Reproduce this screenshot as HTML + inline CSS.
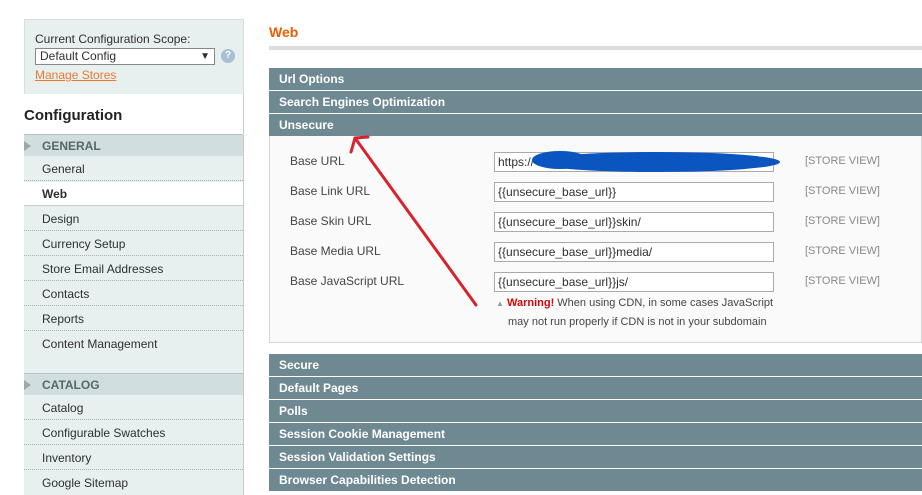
<!DOCTYPE html>
<html><head><meta charset="utf-8"><style>
body{margin:0;width:922px;height:495px;background:#fff;font-family:"Liberation Sans",Arial,sans-serif;font-size:12px;color:#2f2f2f;position:relative;overflow:hidden}
.a{position:absolute}
.scope{left:24px;top:19px;width:218px;height:75px;background:#e7efef;border:1px solid #d6dede}
.nav{left:24px;width:219px;background:#e7efef;border-right:1px solid #c4cccc}
.item{position:absolute;left:24px;width:219px;height:24px;border-bottom:1px dotted #a9b0b0;line-height:24px;padding-left:18px;box-sizing:border-box;font-size:12px}
.grp{position:absolute;left:24px;width:219px;height:22px;background:#d1dedf;border-top:1px solid #b6c3c4;line-height:22px;padding-left:18px;box-sizing:border-box;font-weight:bold;color:#56676b;font-size:12px}
.grp:before{content:"";position:absolute;left:0;top:6px;border-left:7px solid #9aa9ab;border-top:5px solid transparent;border-bottom:5px solid transparent}
.hd{position:absolute;left:269px;width:653px;height:22px;background:#6f8992;color:#fff;font-weight:bold;line-height:22px;padding-left:10px;box-sizing:border-box;font-size:12px}
.lb{position:absolute;left:290px;font-size:12px;color:#444}
.in{position:absolute;left:494px;width:280px;height:20px;border:1px solid #aaa;background:#fff;box-sizing:border-box;line-height:18px;padding-left:3px;font-size:12px}
.sv{position:absolute;left:805px;font-size:11px;color:#888}
</style></head><body>
<div class="a scope"></div>
<div class="a" style="left:35px;top:32px;">Current Configuration Scope:</div>
<div class="a" style="left:35px;top:48px;width:180px;height:17px;border:1px solid #888;background:#fff;box-sizing:border-box;line-height:15px;padding-left:4px">Default Config<span style="position:absolute;right:4px;top:0;font-size:10px">&#9660;</span></div>
<div class="a" style="left:221px;top:49px;width:14px;height:14px;border-radius:50%;background:#a9bfd6;color:#fff;font-size:10px;text-align:center;line-height:14px;font-weight:bold">?</div>
<div class="a" style="left:35px;top:68px;color:#eb7a2d;text-decoration:underline">Manage Stores</div>
<div class="a" style="left:24px;top:94px;width:219px;height:40px;background:#fff;border-right:1px solid #c4cccc"></div>
<div class="a" style="left:24px;top:107px;font-size:15px;font-weight:bold;color:#222">Configuration</div>
<div class="a nav" style="top:135px;height:360px"></div>
<div class="grp" style="top:134px">GENERAL</div>
<div class="item" style="top:157px">General</div>
<div class="item" style="top:182px;background:#fff;font-weight:bold;border-bottom:1px solid #c4cccc">Web</div>
<div class="item" style="top:207px">Design</div>
<div class="item" style="top:232px">Currency Setup</div>
<div class="item" style="top:257px">Store Email Addresses</div>
<div class="item" style="top:282px">Contacts</div>
<div class="item" style="top:307px">Reports</div>
<div class="item" style="top:332px;border:none">Content Management</div>
<div class="grp" style="top:373px">CATALOG</div>
<div class="item" style="top:396px">Catalog</div>
<div class="item" style="top:421px">Configurable Swatches</div>
<div class="item" style="top:446px">Inventory</div>
<div class="item" style="top:471px;border:none">Google Sitemap</div>

<div class="a" style="left:269px;top:24px;font-size:14px;font-weight:bold;color:#eb5e00">Web</div>
<div class="a" style="left:269px;top:46px;width:653px;height:4px;background:#ddd"></div>
<div class="hd" style="top:68px">Url Options</div>
<div class="hd" style="top:91px">Search Engines Optimization</div>
<div class="hd" style="top:114px">Unsecure</div>
<div class="a" style="left:269px;top:136px;width:653px;height:207px;background:#fafafa;border:1px solid #d6d6d6;border-top:none;box-sizing:border-box"></div>
<div class="lb" style="top:154px">Base URL</div><div class="in" style="top:152px">https://</div><div class="sv" style="top:155px">[STORE VIEW]</div>
<div class="lb" style="top:184px">Base Link URL</div><div class="in" style="top:182px">{{unsecure_base_url}}</div><div class="sv" style="top:185px">[STORE VIEW]</div>
<div class="lb" style="top:214px">Base Skin URL</div><div class="in" style="top:212px">{{unsecure_base_url}}skin/</div><div class="sv" style="top:215px">[STORE VIEW]</div>
<div class="lb" style="top:244px">Base Media URL</div><div class="in" style="top:242px">{{unsecure_base_url}}media/</div><div class="sv" style="top:245px">[STORE VIEW]</div>
<div class="lb" style="top:274px">Base JavaScript URL</div><div class="in" style="top:272px">{{unsecure_base_url}}js/</div><div class="sv" style="top:275px">[STORE VIEW]</div>
<div class="a" style="left:496px;top:294px;font-size:11px;line-height:18px;color:#444"><span style="color:#999;font-size:8px">&#9650;</span> <b style="color:#d40707">Warning!</b> When using CDN, in some cases JavaScript<br><span style="padding-left:12px">may not run properly if CDN is not in your subdomain</span></div>
<svg class="a" style="left:0;top:0" width="922" height="495">
<ellipse cx="657" cy="162" rx="123" ry="10" fill="#0a55c0"/>
<ellipse cx="560" cy="160" rx="28" ry="9" fill="#0a55c0"/>
<line x1="476" y1="305" x2="355" y2="138" stroke="#d8232f" stroke-width="3" stroke-linecap="round"/>
<line x1="355" y1="138" x2="368" y2="137" stroke="#d8232f" stroke-width="3" stroke-linecap="round"/>
<line x1="355" y1="138" x2="351" y2="152" stroke="#d8232f" stroke-width="3" stroke-linecap="round"/>
</svg>
<div class="hd" style="top:354px">Secure</div>
<div class="hd" style="top:377px">Default Pages</div>
<div class="hd" style="top:400px">Polls</div>
<div class="hd" style="top:423px">Session Cookie Management</div>
<div class="hd" style="top:446px">Session Validation Settings</div>
<div class="hd" style="top:469px">Browser Capabilities Detection</div>
</body></html>
